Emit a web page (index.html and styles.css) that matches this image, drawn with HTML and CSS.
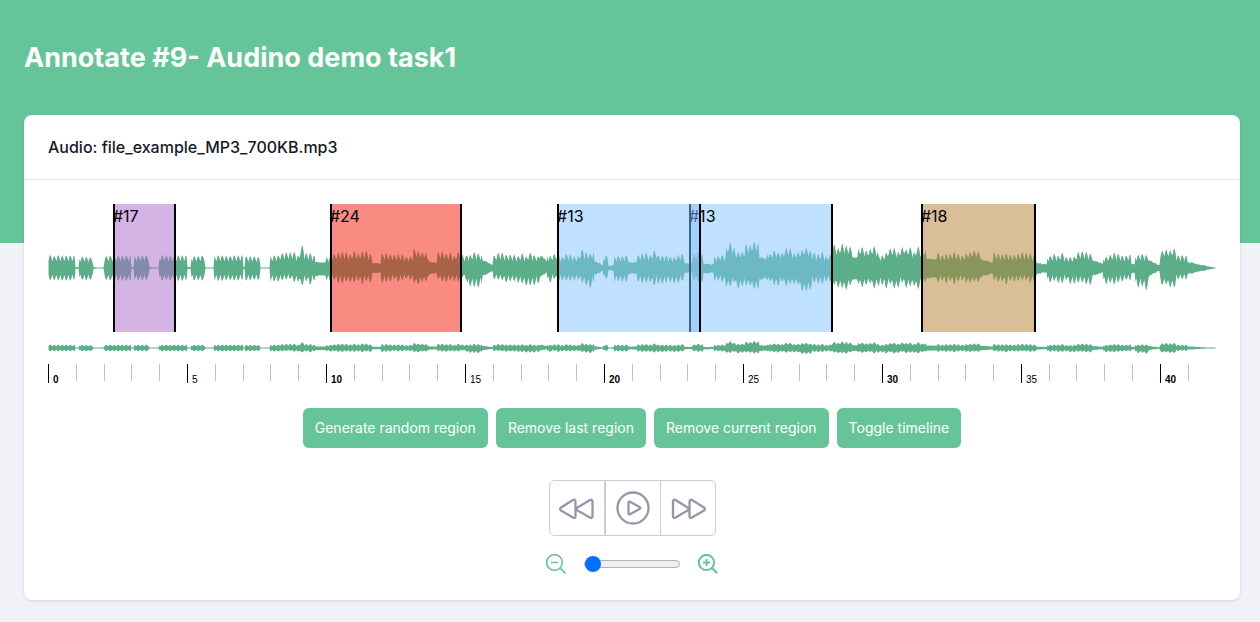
FILE: index.html
```html
<!DOCTYPE html>
<html lang="en">
<head>
<meta charset="utf-8">
<meta name="viewport" content="width=device-width, initial-scale=1">
<title>Annotate</title>
<link rel="stylesheet" href="styles.css">
</head>
<body>
<header class="banner">
  <h1 class="page-title">Annotate #9- Audino demo task1</h1>
</header>
<main class="main">
  <section class="card">
    <h2 class="card-header">Audio: file_example_MP3_700KB.mp3</h2>
    <div class="card-body">
      <div class="track">
        <svg class="wave" id="wave" viewBox="0 0 1168 128" preserveAspectRatio="none" aria-hidden="true"></svg>
        <div class="region region-purple" style="left:5.56%;width:5.4%">#17</div>
        <div class="region region-red" style="left:24.14%;width:11.3%">#24</div>
        <div class="region region-blue" style="left:54.88%;width:12.33%">#13</div>
        <div class="region region-blue" style="left:43.58%;width:12.33%">#13</div>
        <div class="region region-tan" style="left:74.74%;width:9.85%">#18</div>
      </div>
      <svg class="minimap" id="minimap" viewBox="0 0 1168 32" preserveAspectRatio="none" aria-hidden="true"></svg>
      <div class="timeline" id="timeline"></div>
      <div class="actions">
        <button class="btn" type="button">Generate random region</button>
        <button class="btn" type="button">Remove last region</button>
        <button class="btn" type="button">Remove current region</button>
        <button class="btn" type="button">Toggle timeline</button>
      </div>
      <div class="player">
        <button class="player-btn" type="button" aria-label="Rewind">
          <svg class="player-icon" viewBox="0 0 40 40"><path d="M18.500 14v14q0 3-2.500 1.500L4 22.500q-2-1.500 0-3L16 12q2.500-1 2.500 2zM35.500 14v14q0 3-2.500 1.500L20.500 22.500q-2-1.500 0-3L33 12q2.500-1 2.500 2z"/></svg>
        </button>
        <button class="player-btn player-play" type="button" aria-label="Play">
          <svg class="player-icon" viewBox="0 0 40 40"><circle cx="20" cy="20" r="15.500"/><path d="M15.500 14.500v11q0 1.500 1.500.7l9.500-5.200q1.500-1 0-2L17 13.800q-1.500-.8-1.500.7z"/></svg>
        </button>
        <button class="player-btn" type="button" aria-label="Forward">
          <svg class="player-icon" viewBox="0 0 40 40"><path d="M21.500 14v14q0 3 2.500 1.500l12-7q2-1.500 0-3L24 12q-2.500-1-2.500 2zM5 14v14q0 3 2.500 1.500l12-7q2-1.500 0-3L7.500 12Q5 11 5 14z"/></svg>
        </button>
      </div>
      <div class="zoom">
        <button class="zoom-btn" type="button" aria-label="Zoom out">
          <svg class="zoom-icon" viewBox="0 0 20 20"><circle cx="8.500" cy="8.500" r="7.800"/><path d="M14 14l5.500 5.500M5 8.500h7"/></svg>
        </button>
        <input class="zoom-range" type="range" min="0" max="100" value="0" aria-label="Zoom level">
        <button class="zoom-btn" type="button" aria-label="Zoom in">
          <svg class="zoom-icon zoom-icon-in" viewBox="0 0 20 20"><circle cx="8.500" cy="8.500" r="7.600"/><path d="M14 14l5.300 5.300M5 8.500h7M8.500 5v7"/></svg>
        </button>
      </div>
    </div>
  </section>
</main>
<script src="app.js"></script>
</body>
</html>
```
FILE: styles.css
```css
* { box-sizing: border-box; }

body {
  margin: 0;
  min-height: 100vh;
  background: #f0f2f7;
  color: #000;
  font-family: Inter, "Liberation Sans", sans-serif;
  font-size: 16px;
  line-height: 24px;
}

.banner {
  height: 243px;
  padding: 40px 24px;
  background: #66c598;
}

.page-title {
  margin: 0;
  color: #fff;
  font-size: 27px;
  font-weight: 700;
  line-height: 36px;
}

.main {
  margin-top: -128px;
  padding: 0 20px 22px 24px;
}

.card {
  border-radius: 8px;
  background: #fff;
  box-shadow: 0 1px 3px rgba(0, 0, 0, 0.12);
}

.card-header {
  margin: 0;
  padding: 20px 24px;
  border-bottom: 1px solid #e3e4e6;
  color: #14192a;
  font-size: 16px;
  font-weight: 500;
  line-height: 24px;
}

.card-body {
  display: flex;
  flex-direction: column;
  padding: 24px 24px 26px;
}

.track {
  position: relative;
  height: 128px;
}

.wave,
.minimap {
  display: block;
  width: 100%;
  fill: #5bae87;
}

.wave { height: 128px; }
.minimap { height: 32px; }

.region {
  position: absolute;
  top: 0;
  height: 100%;
  border: solid #000;
  border-width: 0 2px;
  text-indent: -2px;
}

.region-purple { background: rgba(169, 103, 203, 0.5); }
.region-red { background: rgba(245, 23, 7, 0.5); }
.region-blue { background: rgba(127, 195, 255, 0.5); }
.region-tan { background: rgba(181, 125, 47, 0.5); }

.timeline {
  display: flex;
  height: 20px;
  overflow: hidden;
}

.tick {
  flex: none;
  height: 17px;
  border-left: 1px solid #c0c0c0;
}

.tick-major {
  height: 19px;
  padding: 10px 0 0 4px;
  border-color: #000;
  font-family: "Liberation Sans", sans-serif;
  font-size: 10px;
  line-height: 12px;
}

.tick-strong { font-weight: 700; }

.actions {
  display: flex;
  flex-wrap: wrap;
  justify-content: center;
  gap: 8px;
  margin-top: 24px;
}

.btn {
  padding: 10px 12px;
  border: 0;
  border-radius: 6px;
  background: #66c598;
  color: #fff;
  font: 400 14px/20px Inter, "Liberation Sans", sans-serif;
}

.player {
  display: flex;
  align-self: center;
  margin-top: 32px;
  border: 1px solid #c9cdd6;
  border-radius: 6px;
}

.player-btn {
  display: flex;
  align-items: center;
  justify-content: center;
  width: 54px;
  height: 54px;
  padding: 0;
  border: 0;
  background: none;
}

.player-play {
  width: 57px;
  border: solid #c9cdd6;
  border-width: 0 1px 0 2px;
}

.player-icon {
  flex: none;
  width: 40px;
  height: 40px;
  fill: none;
  stroke: #9298a8;
  stroke-width: 2.3;
  stroke-linejoin: round;
}

.zoom {
  display: flex;
  align-items: center;
  justify-content: center;
  gap: 18px;
  margin-top: 18px;
}

.zoom-btn {
  display: flex;
  padding: 0;
  border: 0;
  background: none;
}

.zoom-icon {
  width: 20px;
  height: 20px;
  fill: none;
  stroke: #66c598;
  stroke-width: 1.6;
}

.zoom-icon-in { stroke-width: 2; }

.zoom-range {
  width: 96px;
  height: 16px;
  margin: 0;
  background: none;
  appearance: none;
}

.zoom-range::-webkit-slider-runnable-track {
  height: 8px;
  border: 1px solid #b2b2b2;
  border-radius: 4px;
  background: #efefef;
}

.zoom-range::-webkit-slider-thumb {
  width: 16px;
  height: 16px;
  margin-top: -5px;
  border-radius: 50%;
  background: #006fff;
  appearance: none;
}
```
FILE: app.js
```js
// Amplitude envelope: [start, end, peak above, peak below, end scale]
// An end scale below 1 is a smooth fade; 1 is a run of pulses.
const envelope = [
  [0, 27, 11, 11, 1], [27, 31, 1, 1, 0.5], [31, 45, 10, 11, 1], [45, 49, 1, 1, 0.5],
  [56, 83, 11, 11, 1], [83, 86, 1, 1, 0.5], [86, 101, 11, 11, 1], [101, 105, 1, 1, 0.5],
  [111, 139, 11, 11, 1], [139, 143, 1, 1, 0.5], [143, 157, 11, 11, 1],
  [166, 195, 11, 11, 1], [195, 197, 1, 1, 0.5], [197, 212, 10, 11, 1],
  [222, 232, 11, 12, 1], [232, 252, 14, 13, 1], [252, 256, 19, 15, 1], [256, 267, 13, 15, 1],
  [267, 278, 6, 8, 0.9], [278, 283, 10, 11, 1], [283, 304, 14, 14, 1], [304, 324, 15, 14, 1],
  [324, 333, 5, 5, 0.8], [333, 365, 13, 13, 1], [365, 379, 17, 15, 1], [379, 389, 8, 8, 0.5],
  [389, 413, 14, 13, 1], [413, 419, 12, 11, 1], [419, 434, 15, 18, 1], [434, 445, 8, 8, 0.3],
  [445, 468, 13, 13, 1], [468, 492, 14, 15, 1], [492, 499, 12, 8, 0.5], [499, 510, 13, 13, 1],
  [510, 532, 13, 14, 1], [532, 546, 16, 18, 1], [546, 555, 7, 7, 0.3], [555, 560, 11, 10, 1],
  [560, 566, 2, 2, 1.5], [566, 580, 11, 12, 1], [580, 589, 6, 6, 0.9], [589, 609, 15, 15, 1],
  [609, 619, 11, 14, 1], [619, 636, 13, 15, 1], [636, 644, 5, 5, 0.8], [644, 655, 14, 13, 1],
  [655, 666, 4, 5, 0.9], [666, 678, 13, 14, 1], [678, 687, 22, 17, 1], [687, 697, 18, 18, 1],
  [697, 711, 24, 20, 1], [711, 719, 11, 12, 0.8], [719, 752, 17, 16, 1], [752, 764, 18, 22, 1],
  [764, 784, 14, 15, 1], [784, 804, 22, 20, 1], [804, 810, 11, 12, 0.9], [810, 830, 20, 18, 1],
  [830, 840, 15, 20, 1], [840, 852, 18, 18, 1], [852, 857, 23, 17, 1], [857, 878, 19, 18, 1],
  [878, 889, 10, 11, 0.9], [889, 920, 14, 14, 1], [920, 932, 18, 14, 1], [932, 945, 9, 9, 0.5],
  [945, 988, 14, 14, 1], [988, 999, 5, 6, 0.7], [999, 1028, 13, 14, 1], [1028, 1044, 15, 15, 1],
  [1044, 1055, 8, 8, 0.5], [1055, 1083, 13, 14, 1], [1083, 1087, 4, 5, 0.9],
  [1087, 1101, 13, 19, 1], [1101, 1112, 7, 7, 0.3], [1112, 1128, 17, 17, 1],
  [1128, 1139, 12, 11, 1], [1139, 1165, 6, 6, 0.1]
];

const WIDTH = 1168;
const pulse = [0.6, 1, 1.1, 0.85];

function hash(n) {
  const v = Math.sin(n * 12.9898) * 43758.5453;
  return v - Math.floor(v);
}

function sample(x) {
  const part = envelope.find(([from, to]) => x >= from && x < to);
  if (!part) return [0.5, 0.5];
  const [from, to, up, down, end] = part;
  if (end !== 1) {
    const fade = 1 + (end - 1) * (x - from) / (to - from);
    const ripple = 0.85 + 0.3 * hash(x);
    return [up * fade * ripple, down * fade * ripple];
  }
  const beat = Math.floor(x / 4);
  // Loud passages have shallower gaps between the pulses.
  const shape = Math.max(pulse[x % 4], up > 16 ? 0.72 : 0);
  // Quiet pulses have an even height; loud ones vary from beat to beat.
  const spread = up > 11 ? 0.32 : 0.1;
  return [
    up * shape * (1.08 - spread * hash(beat)),
    down * shape * (1.08 - spread * hash(beat + 500))
  ];
}

function draw(id, centre, scale) {
  const top = [];
  const bottom = [];
  for (let x = 0; x < WIDTH; x += 1) {
    const [up, down] = sample(x);
    const high = centre - Math.max(0.5, up * scale);
    const low = centre + Math.max(0.5, down * scale);
    top.push(`${x + 0.5},${high.toFixed(1)}`);
    bottom.unshift(`${x + 0.5},${low.toFixed(1)}`);
  }
  const shape = document.createElementNS('http://www.w3.org/2000/svg', 'polygon');
  shape.setAttribute('points', top.concat(bottom).join(' '));
  document.getElementById(id).append(shape);
}

draw('wave', 64, 1);
draw('minimap', 16, 0.26);

const DURATION = 42;
const timeline = document.getElementById('timeline');
for (let second = 0; second < DURATION; second += 1) {
  const tick = document.createElement('div');
  tick.className = 'tick';
  tick.style.width = `${100 / DURATION}%`;
  if (second % 5 === 0) {
    tick.classList.add('tick-major');
    if (second % 10 === 0) tick.classList.add('tick-strong');
    tick.textContent = second;
  }
  timeline.append(tick);
}
```
